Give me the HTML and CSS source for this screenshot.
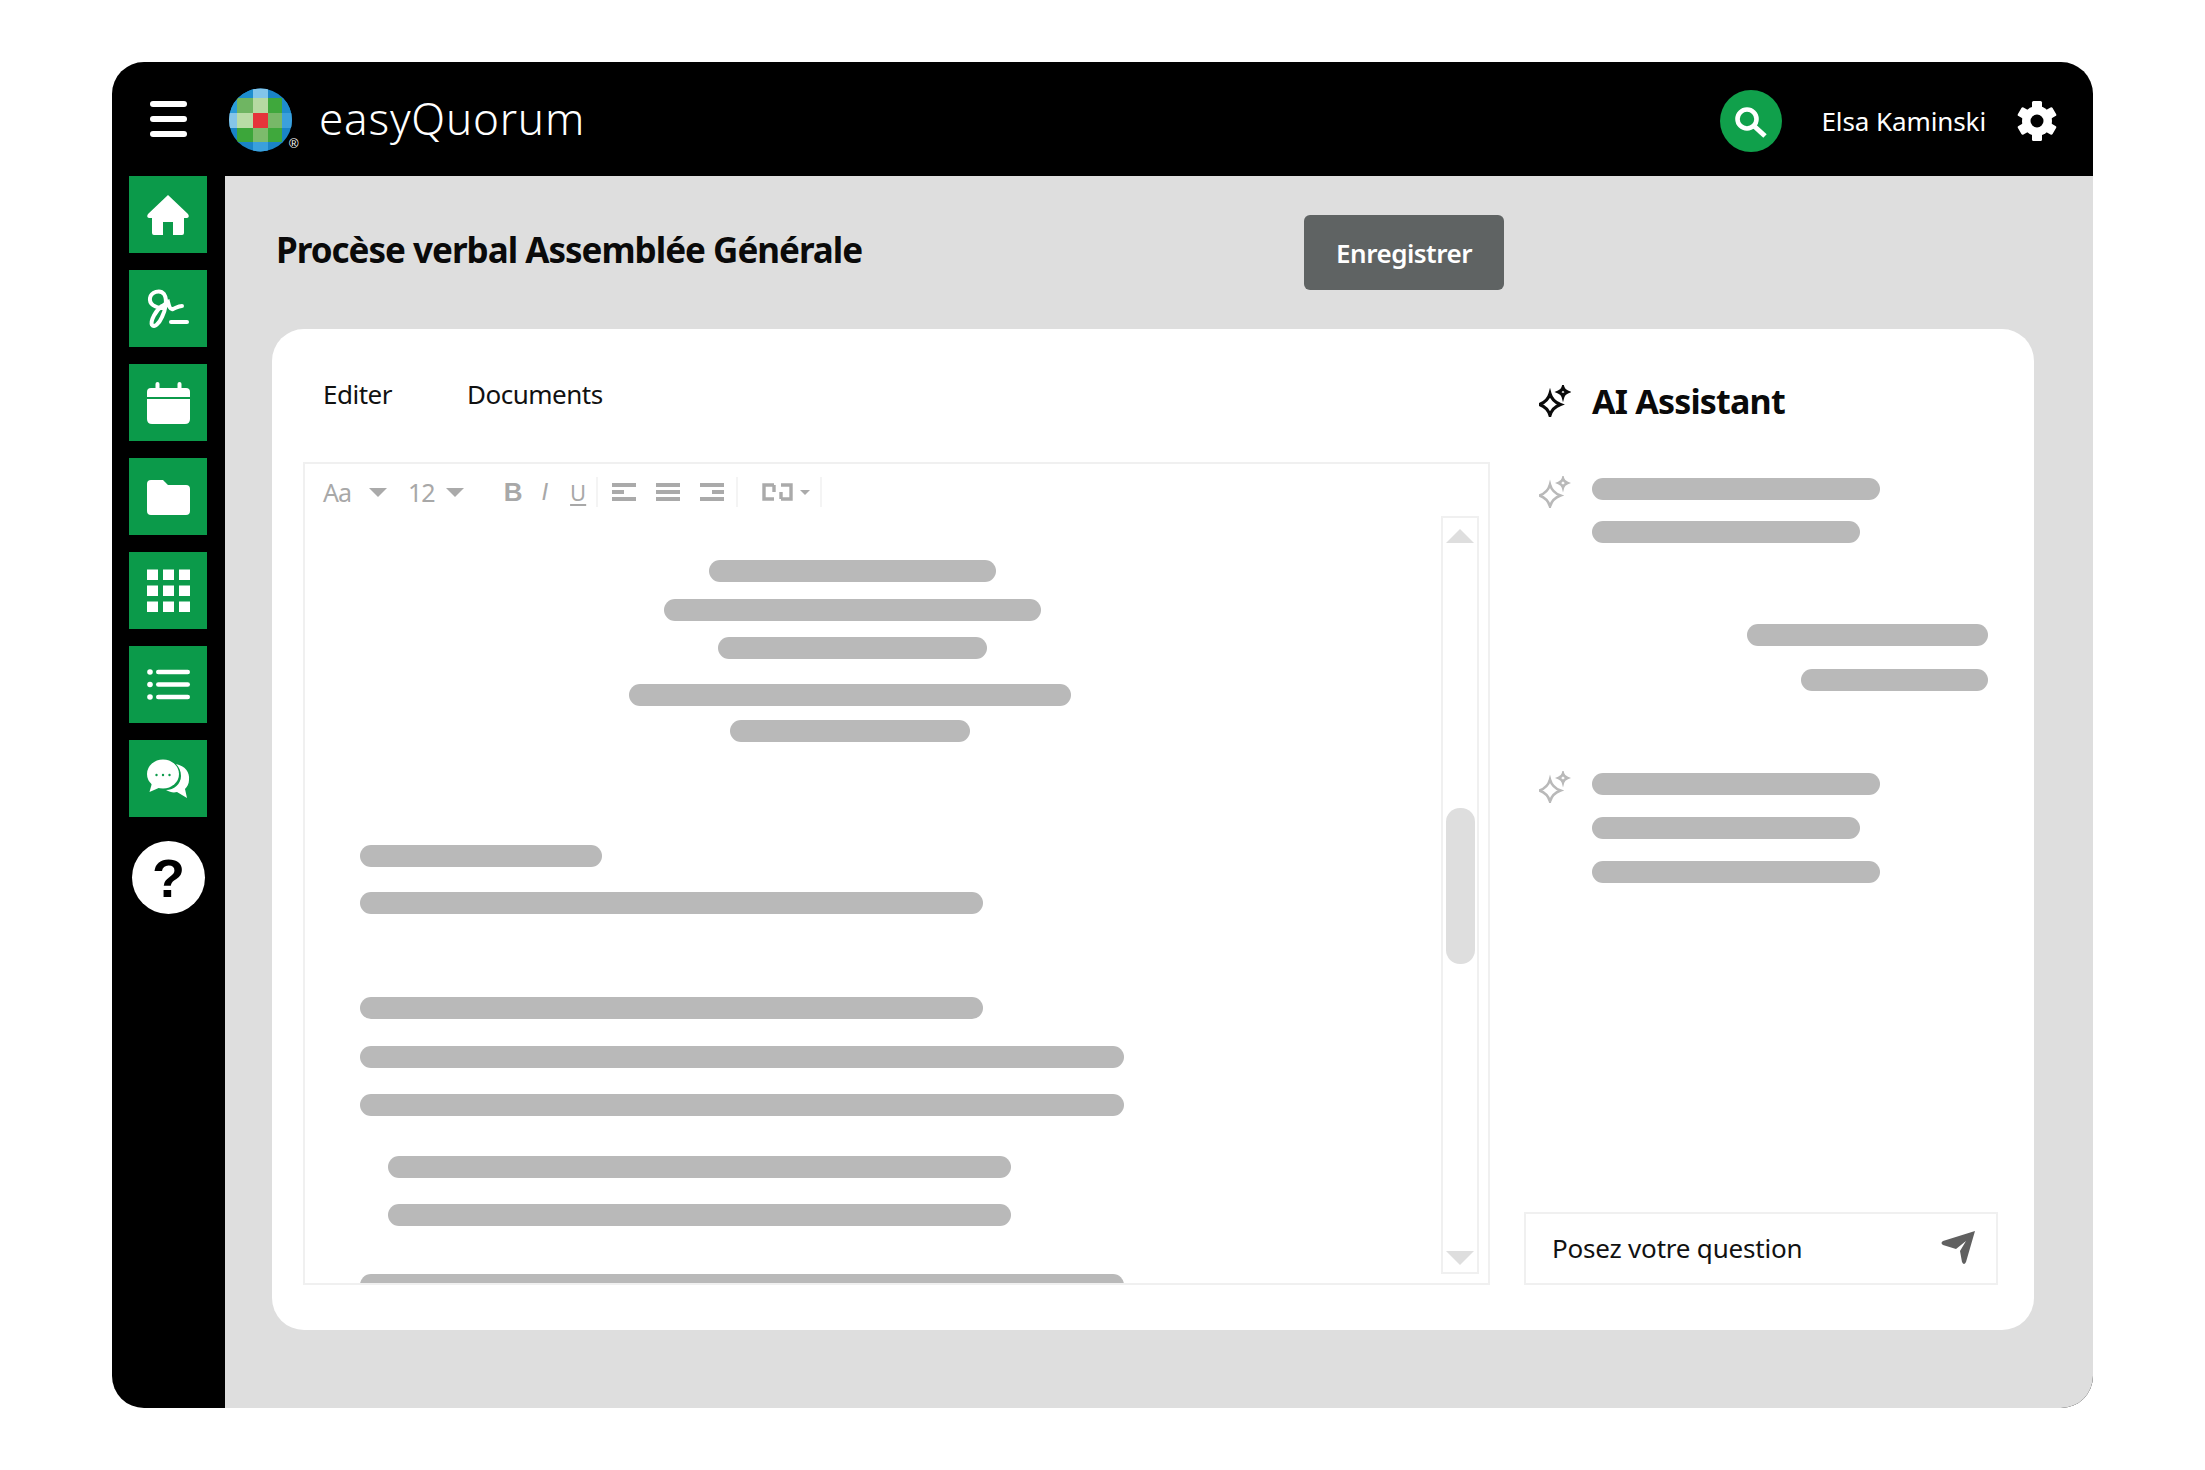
FILE: index.html
```html
<!DOCTYPE html>
<html lang="fr">
<head>
  <meta charset="UTF-8" />
  <title>easyQuorum</title>
  <link rel="stylesheet" href="styles.css">
</head>
<body>
  <svg class="defs" width="0" height="0">
    <symbol id="sparkle" viewBox="8 9 32 32">
      <path d="M19 17.5C20.5 23 24 26.5 29.5 28.5C24 30.5 20.5 34 19 39.5C17.5 34 14 30.5 8.5 28.5C14 26.5 17.5 23 19 17.5Z" />
      <path d="M32 11.5C32.6 13.7 34 15 36.5 16C34 17 32.6 18.3 32 20.5C31.4 18.3 30 17 27.5 16C30 15 31.4 13.7 32 11.5Z" />
    </symbol>
  </svg>

  <div class="app">
    <header class="topbar">
      <div class="burger"><span></span><span></span><span></span></div>
      <svg class="logo" width="72" height="66" viewBox="0 0 72 66">
        <clipPath id="globe"><circle cx="31.5" cy="32" r="31.5" /></clipPath>
        <g clip-path="url(#globe)">
          <rect x="0" y="0" width="64" height="64" fill="#1a84c6" />
          <rect x="8" y="0" width="16" height="10" fill="#1d8dce" />
          <rect x="24" y="0" width="15" height="10" fill="#82c5ea" />
          <rect x="0" y="10" width="8" height="15" fill="#2a9bd8" />
          <rect x="8" y="10" width="16" height="15" fill="#6fb562" />
          <rect x="24" y="10" width="15" height="15" fill="#b6d9a2" />
          <rect x="39" y="10" width="14" height="15" fill="#3fa83c" />
          <rect x="53" y="10" width="11" height="15" fill="#1f8ccc" />
          <rect x="0" y="25" width="8" height="15" fill="#85c5e8" />
          <rect x="8" y="25" width="16" height="15" fill="#b9dca6" />
          <rect x="24" y="25" width="15" height="15" fill="#e5343a" />
          <rect x="39" y="25" width="14" height="15" fill="#78b868" />
          <rect x="53" y="25" width="11" height="15" fill="#3ba0dc" />
          <rect x="8" y="40" width="16" height="14" fill="#3ca63a" />
          <rect x="24" y="40" width="15" height="14" fill="#7cbb6c" />
          <rect x="39" y="40" width="14" height="14" fill="#3fa83c" />
          <rect x="24" y="54" width="15" height="10" fill="#3aa0dc" />
        </g>
        <text x="60" y="60" class="logo-mark">®</text>
      </svg>
      <div class="brand">easyQuorum</div>
      <div class="search">
        <svg width="62" height="62" viewBox="0 0 62 62" fill="none" stroke="#fff">
          <circle cx="27" cy="29" r="9.5" stroke-width="4.6" />
          <path d="M34 36L45 46" stroke-width="5" />
        </svg>
      </div>
      <div class="username">Elsa Kaminski</div>
      <svg class="gear" width="40" height="40" viewBox="0 0 40 40" fill="#fff">
        <circle cx="20" cy="20" r="15" />
        <rect x="15" y="0" width="10" height="40" rx="1.5" />
        <rect x="15" y="0" width="10" height="40" rx="1.5" transform="rotate(60 20 20)" />
        <rect x="15" y="0" width="10" height="40" rx="1.5" transform="rotate(120 20 20)" />
        <circle cx="20" cy="20" r="6.5" fill="#000" />
      </svg>
    </header>

    <nav class="sidebar">
      <a class="nav-btn">
        <svg viewBox="0 0 78 77" fill="#fff"><path d="M39 19L59 38Q61 41 58 42H55V57Q55 59 53 59H44V46H34V59H25Q23 59 23 57V42H20Q17 41 19 38Z" /></svg>
      </a>
      <a class="nav-btn">
        <svg viewBox="0 0 78 77" fill="none" stroke="#fff" stroke-linecap="round" stroke-width="4">
          <path d="M34 38C26 38 20 34 21 28C22 22 31 19 35 24C39 30 36 41 33 47C30 54 25 58 23 55C21 51 27 40 33 36C35 35 37 33 39 32C40 36 41 40 44 39C47 38 49 36 53 36" />
          <path d="M42 52H58" />
        </svg>
      </a>
      <a class="nav-btn">
        <svg viewBox="0 0 78 77" fill="#fff">
          <rect x="26.5" y="18" width="4" height="10" rx="2" />
          <rect x="48.5" y="18" width="4" height="10" rx="2" />
          <path d="M18 33V28Q18 24 22 24H57Q61 24 61 28V33Z" />
          <path d="M18 35H61V55Q61 60 56 60H23Q18 60 18 55Z" />
        </svg>
      </a>
      <a class="nav-btn">
        <svg viewBox="0 0 78 77" fill="#fff"><path d="M18 26Q18 22 22 22H34L39 27H57Q61 27 61 31V53Q61 57 57 57H22Q18 57 18 53Z" /></svg>
      </a>
      <a class="nav-btn">
        <svg viewBox="0 0 78 77" fill="#fff">
          <rect x="18" y="17.5" width="11" height="10.5" /><rect x="34" y="17.5" width="11" height="10.5" /><rect x="50" y="17.5" width="11" height="10.5" />
          <rect x="18" y="33.5" width="11" height="10.5" /><rect x="34" y="33.5" width="11" height="10.5" /><rect x="50" y="33.5" width="11" height="10.5" />
          <rect x="18" y="49.5" width="11" height="10.5" /><rect x="34" y="49.5" width="11" height="10.5" /><rect x="50" y="49.5" width="11" height="10.5" />
        </svg>
      </a>
      <a class="nav-btn">
        <svg viewBox="0 0 78 77" fill="#fff">
          <circle cx="21" cy="26" r="2.8" /><circle cx="21" cy="38.5" r="2.8" /><circle cx="21" cy="51" r="2.8" />
          <rect x="27" y="23.7" width="34" height="4.6" rx="2.3" />
          <rect x="27" y="36.2" width="34" height="4.6" rx="2.3" />
          <rect x="27" y="48.7" width="34" height="4.6" rx="2.3" />
        </svg>
      </a>
      <a class="nav-btn">
        <svg viewBox="0 0 78 77" fill="#fff">
          <path d="M47 24C56 26 61 32 60 40C60 44 58 47 56 49L58 58L48 52C44 53 41 52 37 50C45 50 52 44 52 36C52 31 50 27 47 24Z" />
          <ellipse cx="34" cy="34" rx="16" ry="14.5" />
          <path d="M23 43L20.5 52L32 47Z" />
          <g fill="#0b9a4a"><circle cx="27.5" cy="35" r="1.2" /><circle cx="34" cy="35" r="1.2" /><circle cx="40.5" cy="35" r="1.2" /></g>
        </svg>
      </a>
      <a class="help-btn">?</a>
    </nav>

    <main class="content">
      <div class="title-row">
        <h1>Procèse verbal Assemblée Générale</h1>
        <button class="save-btn">Enregistrer</button>
      </div>

      <section class="card">
        <div class="left-col">
          <div class="tabs">
            <span>Editer</span>
            <span>Documents</span>
          </div>

          <div class="editor">
            <div class="toolbar">
              <span class="tb-text">Aa</span>
              <span class="caret caret-first"></span>
              <span class="tb-text tb-size">12</span>
              <span class="caret caret-second"></span>
              <span class="tb-b">B</span>
              <span class="tb-i">I</span>
              <span class="tb-u">U</span>
              <span class="tb-sep tb-sep-first"></span>
              <svg class="tb-align" width="24" height="18" viewBox="0 0 24 18" fill="#aaa"><rect width="24" height="4" /><rect y="7" width="12" height="4" /><rect y="14" width="24" height="4" /></svg>
              <svg class="tb-align tb-gap" width="24" height="18" viewBox="0 0 24 18" fill="#aaa"><rect width="24" height="4" /><rect y="7" width="24" height="4" /><rect y="14" width="24" height="4" /></svg>
              <svg class="tb-align tb-gap" width="24" height="18" viewBox="0 0 24 18" fill="#aaa"><rect width="24" height="4" /><rect x="12" y="7" width="12" height="4" /><rect y="14" width="24" height="4" /></svg>
              <span class="tb-sep tb-sep-second"></span>
              <svg class="tb-link" width="31" height="18" viewBox="0 0 31 18" fill="none" stroke="#aaa" stroke-width="3.4"><path d="M12 2H2V16H12M19 2H29V16H19M12 2V9M19 16V9" /></svg>
              <span class="caret caret-small"></span>
              <span class="tb-sep tb-sep-third"></span>
            </div>

            <div class="editor-body">
              <div class="doc">
                <div class="lines lines-center gap-a">
                  <div class="bar w287"></div>
                  <div class="bar w377"></div>
                  <div class="bar w269"></div>
                </div>
                <div class="lines lines-center lines-shift gap-b">
                  <div class="bar w442"></div>
                  <div class="bar w240"></div>
                </div>
                <div class="lines lines-left gap-c">
                  <div class="bar w242"></div>
                  <div class="bar w623"></div>
                </div>
                <div class="lines lines-left gap-d">
                  <div class="bar w623"></div>
                  <div class="bar w764"></div>
                  <div class="bar w764"></div>
                </div>
                <div class="lines lines-left lines-indent gap-e">
                  <div class="bar w623"></div>
                  <div class="bar w623"></div>
                </div>
                <div class="lines lines-left gap-f">
                  <div class="bar w764"></div>
                </div>
              </div>
              <div class="scrollbar">
                <span class="arrow-up"></span>
                <span class="thumb"></span>
                <span class="arrow-down"></span>
              </div>
            </div>
          </div>
        </div>

        <aside class="assistant">
          <div class="assistant-head">
            <svg class="spark spark-dark" width="32" height="32"><use href="#sparkle" /></svg>
            <h2>AI Assistant</h2>
          </div>

          <div class="msg">
            <svg class="spark spark-grey" width="32" height="32"><use href="#sparkle" /></svg>
            <div class="lines msg-lines">
              <div class="bar w288"></div>
              <div class="bar w268"></div>
            </div>
          </div>

          <div class="msg msg-user">
            <div class="bar w241"></div>
            <div class="bar w187"></div>
          </div>

          <div class="msg msg-last">
            <svg class="spark spark-grey" width="32" height="32"><use href="#sparkle" /></svg>
            <div class="lines msg-lines">
              <div class="bar w288"></div>
              <div class="bar w268"></div>
              <div class="bar w288"></div>
            </div>
          </div>

          <div class="ask">
            <span>Posez votre question</span>
            <svg width="36" height="37" viewBox="0 0 36 37" fill="#606060"><path d="M35 2L3 12Q0 14 3 16L16 20L26 12L20 22L22 33Q24 37 26 33Z" /></svg>
          </div>
        </aside>
      </section>
    </main>
  </div>
</body>
</html>
```

FILE: styles.css
```css
* {
  box-sizing: border-box;
}

body {
  margin: 0;
  padding: 62px 0 0 112px;
  background: #fff;
  font-family: "Noto Sans", "Open Sans", Arial, sans-serif;
  color: #111;
}

.defs {
  display: block;
  height: 0;
}

.app {
  width: 1981px;
  height: 1346px;
  display: grid;
  grid-template-columns: 113px 1fr;
  grid-template-rows: 114px 1fr;
  background: #000;
  border-radius: 32px;
  overflow: hidden;
}

/* top bar */
.topbar {
  grid-column: 1 / 3;
  display: flex;
  align-items: center;
  padding: 0 36px 0 38px;
  color: #fff;
}

.burger {
  display: flex;
  flex-direction: column;
  gap: 9px;
}

.burger span {
  display: block;
  width: 37px;
  height: 6px;
  background: #fff;
  border-radius: 3px;
}

.logo {
  margin-left: 42px;
  margin-top: 3px;
}

.logo-mark {
  font-family: "Liberation Sans", Arial, sans-serif;
  font-size: 13px;
  fill: #fff;
}

.brand {
  margin-left: 18px;
  margin-bottom: 2px;
  font-size: 44px;
  font-weight: 300;
  letter-spacing: 0.8px;
}

.search {
  width: 62px;
  height: 62px;
  margin-left: auto;
  margin-top: 4px;
  background: #10a04b;
  border-radius: 50%;
}

.username {
  margin-left: 40px;
  font-size: 26px;
  margin-top: 4px;
  letter-spacing: -0.1px;
}

.gear {
  margin-left: 31px;
  margin-top: 3px;
}

/* sidebar */
.sidebar {
  display: flex;
  flex-direction: column;
  align-items: flex-start;
  gap: 17px;
  padding-left: 17px;
}

.nav-btn {
  display: block;
  width: 78px;
  height: 77px;
  background: #0b9a4a;
}

.nav-btn svg {
  display: block;
  width: 78px;
  height: 77px;
}

.help-btn {
  width: 73px;
  height: 73px;
  margin-top: 7px;
  margin-left: 3px;
  display: flex;
  align-items: center;
  justify-content: center;
  background: #fff;
  border-radius: 50%;
  color: #000;
  font-family: "Liberation Sans", Arial, sans-serif;
  font-size: 54px;
  font-weight: 700;
}

/* main area */
.content {
  background: #dedede;
  padding: 39px 59px 0 47px;
}

.title-row {
  display: flex;
  align-items: flex-start;
  justify-content: space-between;
  width: 1232px;
  padding-left: 4px;
}

h1 {
  margin: 0;
  font-size: 35px;
  font-weight: 700;
  line-height: 70px;
  letter-spacing: -1px;
  color: #0a0a0a;
}

.save-btn {
  width: 200px;
  height: 75px;
  border: 0;
  border-radius: 6px;
  background: #5f6363;
  color: #fff;
  font: 600 26px "Noto Sans", Arial, sans-serif;
  letter-spacing: -0.5px;
}

.card {
  display: flex;
  gap: 34px;
  height: 1001px;
  margin-top: 39px;
  padding: 0 36px 45px 31px;
  background: #fff;
  border-radius: 32px;
}

.left-col {
  width: 1187px;
  display: flex;
  flex-direction: column;
}

.tabs {
  height: 133px;
  display: flex;
  align-items: center;
  gap: 75px;
  padding: 0 0 3px 20px;
  font-size: 26px;
  letter-spacing: -0.5px;
}

.editor {
  flex: 1;
  min-height: 0;
  display: flex;
  flex-direction: column;
  border: 2px solid #f0f0f0;
}

/* editor toolbar */
.toolbar {
  height: 52px;
  flex: none;
  display: flex;
  align-items: center;
  padding: 4px 0 0 18px;
  color: #a8a8a8;
}

.tb-text {
  font-size: 25px;
  letter-spacing: -1px;
}

.tb-size {
  margin-left: 21px;
}

.caret {
  width: 0;
  height: 0;
  border-left: 9px solid transparent;
  border-right: 9px solid transparent;
  border-top: 9px solid #aaa;
}

.caret-first {
  margin-left: 18px;
}

.caret-second {
  margin-left: 11px;
}

.caret-small {
  margin-left: 7px;
  border-left-width: 5px;
  border-right-width: 5px;
  border-top-width: 5px;
}

.tb-b {
  margin-left: 40px;
  font-family: "Liberation Sans", Arial, sans-serif;
  font-size: 26px;
  font-weight: 700;
  color: #a8a8a8;
}

.tb-i {
  margin-left: 19px;
  font-family: "Liberation Sans", Arial, sans-serif;
  font-size: 24px;
  font-style: italic;
}

.tb-u {
  margin-left: 22px;
  font-size: 22px;
  text-decoration: underline;
  text-underline-offset: 3px;
}

.tb-sep {
  width: 2px;
  height: 30px;
  background: #f4f4f4;
}

.tb-sep-first {
  margin-left: 10px;
}

.tb-sep-second {
  margin-left: 12px;
}

.tb-sep-third {
  margin-left: 10px;
}

.tb-align {
  margin-left: 14px;
}

.tb-gap {
  margin-left: 20px;
}

.tb-link {
  margin-left: 24px;
}

/* editor body */
.editor-body {
  flex: 1;
  min-height: 0;
  display: flex;
  justify-content: space-between;
  overflow: hidden;
}

.doc {
  width: 1095px;
  padding-top: 44px;
}

.scrollbar {
  width: 38px;
  height: 758px;
  margin-right: 9px;
  padding: 11px 0 7px;
  display: flex;
  flex-direction: column;
  align-items: center;
  border: 2px solid #f0f0f0;
}

.arrow-up {
  width: 0;
  height: 0;
  border-left: 14px solid transparent;
  border-right: 14px solid transparent;
  border-bottom: 14px solid #dedede;
}

.thumb {
  width: 29px;
  height: 156px;
  margin-top: 265px;
  background: #dedede;
  border-radius: 14px;
}

.arrow-down {
  width: 0;
  height: 0;
  margin-top: auto;
  border-left: 14px solid transparent;
  border-right: 14px solid transparent;
  border-top: 14px solid #dedede;
}

/* placeholder lines */
.lines {
  display: flex;
  flex-direction: column;
}

.lines-center {
  align-items: center;
}

.lines-shift {
  margin-left: -5px;
}

.lines-left {
  padding-left: 55px;
}

.lines-indent {
  padding-left: 83px;
}

.gap-a {
  gap: 16.5px;
}

.gap-b {
  gap: 14px;
  margin-top: 25px;
}

.gap-c {
  gap: 25px;
  margin-top: 103px;
}

.gap-d {
  gap: 26.5px;
  margin-top: 83px;
}

.gap-e {
  gap: 26px;
  margin-top: 40px;
}

.gap-f {
  margin-top: 48px;
}

.bar {
  height: 22px;
  flex: none;
  background: #b9b9b9;
  border-radius: 11px;
}

.w187 { width: 187px; }
.w240 { width: 240px; }
.w241 { width: 241px; }
.w242 { width: 242px; }
.w268 { width: 268px; }
.w269 { width: 269px; }
.w287 { width: 287px; }
.w288 { width: 288px; }
.w377 { width: 377px; }
.w442 { width: 442px; }
.w623 { width: 623px; }
.w764 { width: 764px; }

/* assistant panel */
.assistant {
  flex: 1;
  display: flex;
  flex-direction: column;
}

.assistant-head {
  height: 146px;
  flex: none;
  display: flex;
  align-items: center;
  padding: 0 0 3px 15px;
}

h2 {
  margin: 0 0 0 21px;
  font-size: 34px;
  font-weight: 700;
  letter-spacing: -0.8px;
  color: #0a0a0a;
}

.spark {
  flex: none;
  fill: none;
  stroke-width: 2.6;
}

.spark-dark {
  stroke: #0a0a0a;
  stroke-width: 3;
}

.spark-grey {
  stroke: #b9b9b9;
}

.msg {
  display: flex;
  padding: 3px 0 0 15px;
}

.msg .spark {
  margin-top: -2px;
}

.msg-lines {
  margin-left: 21px;
  gap: 21px;
}

.msg-user {
  flex-direction: column;
  align-items: flex-end;
  gap: 23px;
  padding: 0 10px 0 0;
  margin-top: 81px;
}

.msg-last {
  padding-top: 0;
  margin-top: 82px;
}

.msg-last .msg-lines {
  gap: 22px;
}

.ask {
  height: 73px;
  margin-top: auto;
  display: flex;
  align-items: center;
  justify-content: space-between;
  padding: 0 20px 2px 26px;
  border: 2px solid #f0f0f0;
  font-size: 26px;
  letter-spacing: -0.2px;
}
```
